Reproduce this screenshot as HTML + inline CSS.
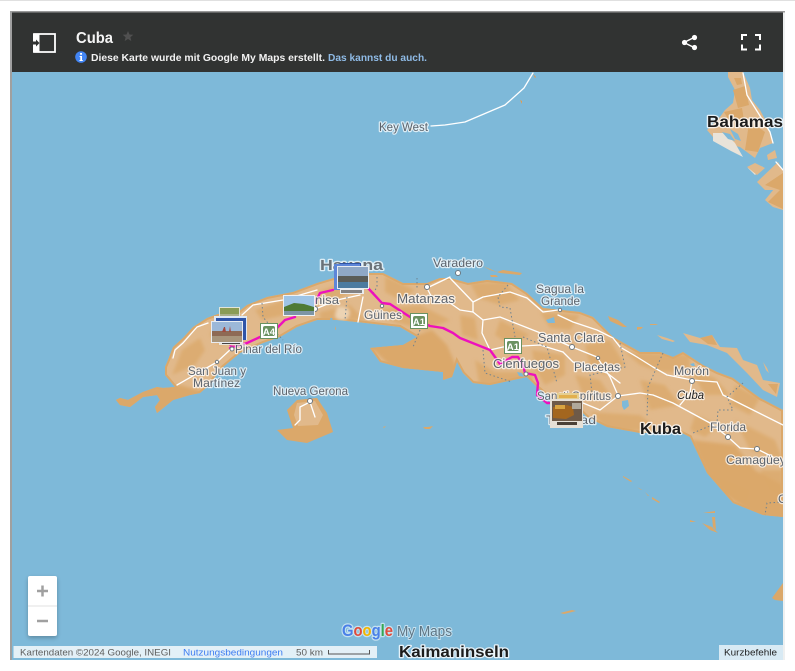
<!DOCTYPE html>
<html><head><meta charset="utf-8"><style>
html,body{margin:0;padding:0;background:#fff;width:795px;height:671px;overflow:hidden}
svg{position:absolute;left:0;top:0}
text{font-family:"Liberation Sans",sans-serif}
.l{font-size:12px;fill:#5c636c;stroke:#fff;stroke-opacity:.72;stroke-width:2.5px;paint-order:stroke;stroke-linejoin:round}
.b{font-size:15.5px;font-weight:bold;fill:#1c1c1c;stroke:#fff;stroke-opacity:.8;stroke-width:2.5px;paint-order:stroke;stroke-linejoin:round}
.r{fill:none;stroke:#fff;stroke-width:1.3;stroke-linejoin:round;stroke-linecap:round}
.d{fill:none;stroke:#6f8290;stroke-width:1;stroke-dasharray:1.5 2.5}
.m{fill:#dba86a}
.c{fill:#fff;stroke:#6d7880;stroke-width:1}
</style></head><body>
<svg width="795" height="671" viewBox="0 0 795 671" xmlns="http://www.w3.org/2000/svg">
<defs>
<clipPath id="mc"><rect x="12" y="72" width="771" height="588"/></clipPath>
<path id="cu" d="M116 400L120 398L128 400L143 392L157 387L163 388L175 387L165 375L165 367L168 360L173 347L183 338L193 327L207 318L218 314L237 313L247 305L267 297L293 292L317 283L337 277L363 273L383 273L403 283L427 283L440 278L450 278L468 283L487 280L512 283L527 293L543 308L580 312L593 317L613 337L640 352L660 352L673 357L683 352L703 365L717 372L733 378L753 393L760 398L783 410L783 517L763 515L733 503L707 473L690 437L680 432L640 433L607 427L587 417L580 410L553 400L537 387L527 377L513 380L490 385L473 383L463 373L457 362L452 377L443 380L443 372L403 368L380 362L370 348L403 345L417 337L400 327L357 322L337 320L317 320L297 327L280 337L263 343L240 353L223 367L207 387L200 393L190 395L173 400L157 413L155 407L160 400L157 395L143 397L130 407L120 405Z"/>
<clipPath id="cc"><use href="#cu"/></clipPath>
<filter id="bl" x="-10%" y="-10%" width="120%" height="120%"><feGaussianBlur stdDeviation="1.6"/></filter>
</defs>
<rect x="0" y="0" width="795" height="1" fill="#e0e0e0"/>
<rect x="783" y="12" width="2" height="648" fill="#eef0f0"/>
<rect x="10" y="11" width="775" height="1.5" fill="#999"/>
<rect x="10" y="11" width="2" height="649" fill="#a0a0a0"/>
<g clip-path="url(#mc)">
<rect x="12" y="72" width="771" height="588" fill="#7eb9d9"/>
<use href="#cu" fill="#e1b98b"/>
<g clip-path="url(#cc)">
<use href="#cu" fill="none" stroke="#dba86a" stroke-width="4"/>
<g filter="url(#bl)">
<path class="m" d="M112 392L180 385L205 392L160 415L110 410Z"/>
<path class="m" d="M368 345L415 336L432 330L447 345L460 375L445 385L395 370Z"/>
<path class="m" d="M692 440L735 445L755 470L783 485L783 520L755 515L725 495L705 470Z"/>
<path class="m" opacity=".75" d="M172 375L182 350L200 338L205 350L195 365ZM215 320L245 318L240 335L220 345L210 335ZM255 310L290 298L310 300L285 315L262 320ZM318 292L345 282L350 292L330 305ZM385 276L415 290L400 300L385 292ZM320 312L350 305L365 320L320 322ZM375 310L420 305L450 320L425 330L395 322Z"/>
<path class="m" opacity=".75" d="M470 283L505 282L520 300L500 305L478 298ZM460 315L475 318L478 340L462 335ZM500 320L530 335L510 345L495 335ZM475 360L495 372L535 372L530 385L480 388ZM532 350L565 355L565 375L545 385L535 370Z"/>
<path class="m" opacity=".75" d="M540 312L580 315L570 330L550 328ZM585 345L610 340L625 365L605 375L590 365ZM575 375L600 380L610 395L585 400ZM590 412L640 415L660 430L610 432ZM625 352L690 355L690 372L660 372L640 365ZM640 380L665 385L680 405L650 410ZM690 370L715 378L730 395L705 395ZM735 385L760 398L750 415L730 405ZM695 415L720 425L705 437L690 430ZM735 420L775 440L783 460L750 450ZM700 470L750 490L745 505L720 490ZM760 470L783 470L783 495L770 490Z"/>
<path fill="#ecd3b3" d="M337 308q8-3 12 2q2 6-4 10q-8 1-10-4z"/>
</g>
</g>
<path fill="#7eb9d9" d="M546 320l8-3 1 6-7 0zM622 401l6-1 1 6-5 4-2-4zM517 372l5 1 2 4-5-1zM690 364l4-1 1 3-3 0zM330 318l2 0 1 3-2 0z"/>
<!-- Isla de la Juventud -->
<path fill="#dba86a" d="M287 410L297 400L317 398L327 413L333 432L307 443L287 440L277 430L293 428Z"/>
<path fill="#e1b98b" d="M297 403L315 401L323 415L318 425L298 426L294 415Z"/>
<!-- small islands -->
<path fill="#dba86a" d="M483 266L497 272L503 270L522 273L520 275L500 273L490 270ZM490 275l6 0 2 2-7 0zM608 316l10 4 9 7-4 0-13-6zM637 327l6 0-2 2-4 1zM650 324h8l-2 1h-6zM623 476l9 5-1 1-8-5zM637 487l5 3-1 0zM645 492l4 4-1 0zM652 497l8 5-1 1-7-4zM690 520l6 2-6 0zM703 513l12-2 0 2zM702 523l10 4 6 6-8-3zM712 517l3 0 1 13-3-3zM772 598l11-15v18l-8-1zM560 613l12-3 4 1-12 3zM423 427l5 0 5-1-3 3-5 0zM383 427l3-1-2 2zM335 326l1 3-1 1z"/>
<path fill="#e1b98b" d="M683 333L700 338L712 335L720 347L737 348L743 360L757 365L763 380L780 383L777 397L763 390L747 373L727 353L707 345L690 342ZM657 335l10 3 8 3-2 1-11-3zM763 362l4 6 2 5-3-3z"/>
<path fill="#dba86a" d="M700 338l12-3 5 10-9-1zM768 384l10 0-2 10z"/>
<!-- Bahamas -->
<path fill="#e1b98b" d="M728 72L743 72L750 88L752 100L760 110L767 123L773 143L760 148L755 158L740 147L723 143L713 137L707 130L720 117L725 110L733 103L735 90L728 77Z"/>
<path class="m" d="M733 90L745 86L749 105L738 108ZM745 118L765 132L758 152L745 150L748 130ZM724 112L742 108L744 120L730 122ZM734 78l7 0 1 6-5 1z"/>
<path fill="#e9e3d9" d="M713 133l12 0 10 10 8 14-12-6-18-10zM748 168l10-3 5 2-8 8z"/>
<path fill="#7eb9d9" d="M722 132l8 2 5 7-7-2zM730 129l8 5 3 7-6-2z"/>
<path fill="#e1b98b" d="M767 155l8-5 2 8-9 2zM747 167l8-4 10 5-8 7zM757 182l21-20 5 8v20l-18 0zM765 200l18-22v32l-10-3z"/>
<path class="m" d="M765 185l18-12v18zM768 202l15-15v22z"/>
<path class="r" d="M743 73L747 95L770 132L773 143M776 162L783 170"/>
<!-- Key west chain -->
<path class="r" d="M431 126L445 125L465 122L505 105L524 88L533 73"/>
<path fill="#e59b4c" d="M408 130l5-2 0 1-4 2zM520 100l2 1 0 3zM533 74l3 3-1 1z"/>
<!-- roads -->
<path class="r" d="M173 358L175 350L183 343L197 327L208 323M177 385L217 362L232 348M242 315L253 305L283 300L317 290M313 310L337 300L360 295M363 297L358 322M427 288L450 277M450 278L473 302L473 312M427 288L433 300L450 303L460 310L473 312M368 288L382 302"/>
<path class="r" d="M473 302L483 297L510 292L527 298L543 312L558 310M473 312L483 320L500 317L538 332L572 347L597 357L610 377L617 393M483 320L482 333L490 350L503 347L540 345L563 352"/>
<path class="r" stroke-width="2" d="M563 352L573 362L607 373L620 383"/>
<path class="r" d="M558 315L573 322L597 330L613 338L620 347L637 357L653 367L667 375L692 380L717 382L723 395L753 410L783 425M618 396L640 393L653 395L673 403L710 423L728 437L740 448L757 449L773 457M692 380L690 393L680 405M618 396L600 410L583 403"/>
<path class="r" d="M310 402L300 407L300 420L295 425M310 402L315 417"/>
<!-- borders -->
<path class="d" d="M262 303L263 317L272 328L283 340M377 277L377 287L372 295M347 297L345 320M417 278L417 288M420 330L413 347M508 285L498 297L500 307L510 308L515 337M483 350L485 373L512 382M523 337L547 347L557 383M620 343L625 367L590 375L592 393M663 353L648 387L647 417M743 383L727 397L733 410L718 410L717 423L693 433M783 502L767 503L765 515"/>
<!-- route -->
<path fill="none" stroke="#ed10bd" stroke-width="2.4" stroke-linejoin="round" stroke-linecap="round" d="M230 348L247 343L260 337L277 328L285 320L295 317M315 303L320 293L333 290M368 288L382 303L390 304L410 317L430 326L443 328L453 333L460 338L490 350L500 364L512 357L518 357L523 365L525 373L535 375L538 383L537 395L547 403L552 403"/>
<path d="M229 345l6 1-2 4z" fill="#ed10bd"/>
<!-- labels -->
<text class="l" x="379" y="131" textLength="49" lengthAdjust="spacingAndGlyphs">Key West</text>
<text class="b" x="707" y="127" textLength="76" lengthAdjust="spacingAndGlyphs">Bahamas</text>
<text class="l" x="320" y="270" style="font-size:15px;font-weight:bold;fill:#6b7278" textLength="63" lengthAdjust="spacingAndGlyphs">Havana</text>
<text class="l" x="433" y="267" textLength="50" lengthAdjust="spacingAndGlyphs">Varadero</text>
<text class="l" x="397" y="303" style="font-size:13px" textLength="58" lengthAdjust="spacingAndGlyphs">Matanzas</text>
<text class="l" x="536" y="293" textLength="48" lengthAdjust="spacingAndGlyphs">Sagua la</text>
<text class="l" x="541" y="305" textLength="39" lengthAdjust="spacingAndGlyphs">Grande</text>
<text class="l" x="538" y="342" style="font-size:13px" textLength="66" lengthAdjust="spacingAndGlyphs">Santa Clara</text>
<text class="l" x="574" y="371" textLength="46" lengthAdjust="spacingAndGlyphs">Placetas</text>
<text class="l" x="493" y="368" style="font-size:13px" textLength="66" lengthAdjust="spacingAndGlyphs">Cienfuegos</text>
<text class="l" x="537" y="400" textLength="74" lengthAdjust="spacingAndGlyphs">Sancti Spíritus</text>
<text class="l" x="546" y="424" textLength="50" lengthAdjust="spacingAndGlyphs">Trinidad</text>
<text class="l" x="364" y="319" textLength="38" lengthAdjust="spacingAndGlyphs">Güines</text>
<text class="l" x="315" y="304" textLength="24" lengthAdjust="spacingAndGlyphs">nisa</text>
<text class="l" x="235" y="353" textLength="67" lengthAdjust="spacingAndGlyphs">Pinar del Río</text>
<text class="l" x="188" y="375" textLength="58" lengthAdjust="spacingAndGlyphs">San Juan y</text>
<text class="l" x="193" y="387" textLength="47" lengthAdjust="spacingAndGlyphs">Martínez</text>
<text class="l" x="273" y="395" textLength="75" lengthAdjust="spacingAndGlyphs">Nueva Gerona</text>
<text class="l" x="674" y="375" textLength="35" lengthAdjust="spacingAndGlyphs">Morón</text>
<text class="l" x="677" y="399" style="font-style:italic;fill:#222" textLength="27" lengthAdjust="spacingAndGlyphs">Cuba</text>
<text class="b" x="640" y="434" textLength="41" lengthAdjust="spacingAndGlyphs">Kuba</text>
<text class="l" x="710" y="431" textLength="36" lengthAdjust="spacingAndGlyphs">Florida</text>
<text class="l" x="726" y="464" textLength="60" lengthAdjust="spacingAndGlyphs">Camagüey</text>
<text class="b" x="399" y="657" textLength="110" lengthAdjust="spacingAndGlyphs">Kaimaninseln</text>
<text class="l" x="778" y="503">C</text>
<!-- city dots -->
<circle class="c" cx="458" cy="273" r="2.5"/><circle class="c" cx="427" cy="287" r="2.5"/><circle class="c" cx="315" cy="309" r="2.5"/><circle class="c" cx="232" cy="349" r="2"/><circle class="c" cx="217" cy="362" r="1.7"/><circle class="c" cx="310" cy="401" r="2.5"/><circle class="c" cx="382" cy="306" r="1.7"/><circle class="c" cx="560" cy="310" r="1.7"/><circle class="c" cx="572" cy="347" r="2.5"/><circle class="c" cx="598" cy="358" r="1.7"/><circle class="c" cx="526" cy="374" r="2"/><circle class="c" cx="618" cy="396" r="2.5"/><circle class="c" cx="692" cy="381" r="2.5"/><circle class="c" cx="728" cy="437" r="2.5"/><circle class="c" cx="757" cy="449" r="2.5"/>
<!-- shields -->
<g><rect x="260.500" y="323.500" width="17" height="15" fill="#fff" stroke="#6a9160"/><rect x="263" y="326" width="12" height="10" rx="2" fill="#6a9160"/><text x="269" y="335" font-size="9.500" font-weight="bold" fill="#fff" text-anchor="middle">A4</text></g>
<g><rect x="410.500" y="313.500" width="17" height="15" fill="#fff" stroke="#6a9160"/><rect x="413" y="316" width="12" height="10" rx="2" fill="#6a9160"/><text x="419" y="325" font-size="9.500" font-weight="bold" fill="#fff" text-anchor="middle">A1</text></g>
<g><rect x="504.500" y="338.500" width="17" height="15" fill="#fff" stroke="#6a9160"/><rect x="507" y="341" width="12" height="10" rx="2" fill="#6a9160"/><text x="513" y="350" font-size="9.500" font-weight="bold" fill="#fff" text-anchor="middle">A1</text></g>
<!-- photos west stack -->
<rect x="219" y="307" width="21" height="13" fill="#e3e5d8"/><rect x="220" y="308" width="19" height="6" fill="#8a9c55"/><rect x="220" y="314" width="19" height="5" fill="#aab088"/>
<rect x="214" y="316" width="33" height="24" fill="#dfe8f5"/><rect x="216" y="318" width="30" height="22" fill="#2f55a8"/>
<rect x="219" y="336" width="24" height="9" fill="#e9e3d9"/><rect x="222" y="342" width="18" height="2" fill="#444"/>
<rect x="211" y="321" width="32" height="22" fill="#e8ecf2"/><rect x="212" y="322" width="30" height="20" fill="#9cb8d8"/><rect x="212" y="331" width="30" height="5" fill="#8e6a55"/><rect x="212" y="336" width="30" height="6" fill="#a8957c"/><path d="M222 332l2-5 1 0 1 5zM229 332l1-6 1 6z" fill="#a04a40"/>
<!-- middle photo -->
<rect x="283" y="295" width="32" height="21" fill="#eef1f4"/><rect x="284" y="296" width="30" height="19" fill="#9ec4e6"/><path d="M284 307l10-4 10 1 10 3v8h-30z" fill="#4f7a35"/><rect x="284" y="311" width="30" height="4" fill="#7d95a5"/>
<!-- havana photo -->
<rect x="340" y="263" width="21" height="6" fill="#2f55a8"/>
<rect x="334" y="264" width="26" height="26" fill="#5e86d8"/>
<rect x="340" y="289" width="24" height="5" fill="#e9ecf0"/><path d="M341 290h21v3h-21z" fill="#555" opacity=".7"/>
<rect x="337" y="266" width="32" height="23" fill="#e8edf2"/><rect x="338" y="267" width="30" height="21" fill="#8fa8c6"/><rect x="338" y="276" width="30" height="6" fill="#5a5c58"/><rect x="338" y="282" width="30" height="6" fill="#4c7ba0"/>
<!-- trinidad photo -->
<rect x="557" y="393" width="22" height="7" fill="#e5cf92"/><rect x="559" y="395" width="18" height="3" fill="#e2b04e"/>
<rect x="550" y="399" width="33" height="29" fill="#e6e0d6"/><rect x="552" y="401" width="30" height="20" fill="#6e5a48"/><path d="M553 407l14-2 6 2 1 8-8 4-13-1z" fill="#a3661f"/><rect x="555" y="405" width="10" height="4" fill="#d9a440"/><rect x="572" y="403" width="9" height="6" fill="#b0a89a"/><rect x="557" y="422" width="20" height="3" fill="#4a4036"/>
<!-- Google logo -->
<text x="342" y="636" font-size="16.500" font-weight="bold" textLength="51" lengthAdjust="spacingAndGlyphs" style="paint-order:stroke;stroke:#d6ebf5;stroke-opacity:.8;stroke-width:2.500px;stroke-linejoin:round"><tspan fill="#4a80e8">G</tspan><tspan fill="#e04a3a">o</tspan><tspan fill="#f2b600">o</tspan><tspan fill="#4a80e8">g</tspan><tspan fill="#35a853">l</tspan><tspan fill="#e04a3a">e</tspan></text>
<text x="397" y="636" font-size="15" fill="#5f7685" textLength="55" lengthAdjust="spacingAndGlyphs" style="paint-order:stroke;stroke:#d6ebf5;stroke-opacity:.8;stroke-width:2px">My Maps</text>
<!-- attribution -->
<rect x="13.500" y="646" width="363.500" height="12" fill="#fff" fill-opacity=".78"/>
<text x="20" y="655.500" font-size="9.500" fill="#5e5e5e" textLength="151" lengthAdjust="spacingAndGlyphs">Kartendaten ©2024 Google, INEGI</text>
<text x="183" y="655.500" font-size="9.500" fill="#3d7cf2" textLength="100" lengthAdjust="spacingAndGlyphs">Nutzungsbedingungen</text>
<text x="296" y="655.500" font-size="9.500" fill="#5e5e5e" textLength="27" lengthAdjust="spacingAndGlyphs">50 km</text>
<path d="M328.500 650v4h41v-4" fill="none" stroke="#555" stroke-width="1"/>
<rect x="719" y="645" width="64" height="15" fill="#fff" fill-opacity=".7"/>
<text x="724" y="655.500" font-size="9.500" fill="#222" textLength="53" lengthAdjust="spacingAndGlyphs">Kurzbefehle</text>
<!-- zoom -->
<rect x="28" y="576" width="29" height="60" rx="2" fill="#000" opacity=".25" transform="translate(0 2)" style="filter:blur(2px)"/>
<rect x="28" y="576" width="29" height="60" rx="2" fill="#fff"/>
<rect x="28" y="605.500" width="29" height="1" fill="#e2e2e2"/>
<path d="M37 591h11M42.500 585.500v11M37 621h11" stroke="#a0a0a0" stroke-width="2.500" fill="none"/>
</g>
<!-- header -->
<rect x="12" y="12.500" width="771" height="59.500" fill="#313332"/>
<path d="M34 34h21v18h-21z" fill="none" stroke="#fff" stroke-width="1.800"/>
<rect x="33" y="34" width="6.500" height="18" fill="#fff"/>
<path d="M33 41.500h3v-2l3.500 3.500-3.500 3.500v-2h-3z" fill="#313332"/>
<text x="76" y="43" font-size="16" font-weight="bold" fill="#f4f4f4" textLength="37" lengthAdjust="spacingAndGlyphs">Cuba</text>
<path d="M128 31l1.500 3.500 3.800.3-2.900 2.500.9 3.700-3.300-2-3.300 2 .9-3.700-2.900-2.500 3.800-.3z" fill="#505050"/>
<circle cx="81" cy="57" r="5.800" fill="#4285f4"/>
<path d="M80.100 53h1.900v1.800h-1.900zM79.600 56h2.400v4h.8v1h-3.300v-1h.8v-3h-.7z" fill="#fff"/>
<text x="91" y="61" font-size="10.500" font-weight="bold" fill="#f2f2f2" textLength="234" lengthAdjust="spacingAndGlyphs">Diese Karte wurde mit Google My Maps erstellt.</text>
<text x="328" y="61" font-size="10.500" font-weight="bold" fill="#8fbbe6" textLength="99" lengthAdjust="spacingAndGlyphs">Das kannst du auch.</text>
<path d="M694 37.500L684 42.500L694 47.500" fill="none" stroke="#fff" stroke-width="1.500"/>
<circle cx="694.500" cy="37.500" r="2.600" fill="#fff"/><circle cx="684.500" cy="42.500" r="2.600" fill="#fff"/><circle cx="694.500" cy="47.500" r="2.600" fill="#fff"/>
<path d="M742 40v-5h5M755 35h5v5M760 44.500v5h-5M747 49.500h-5v-5" fill="none" stroke="#fff" stroke-width="2"/>
</svg>
</body></html>
